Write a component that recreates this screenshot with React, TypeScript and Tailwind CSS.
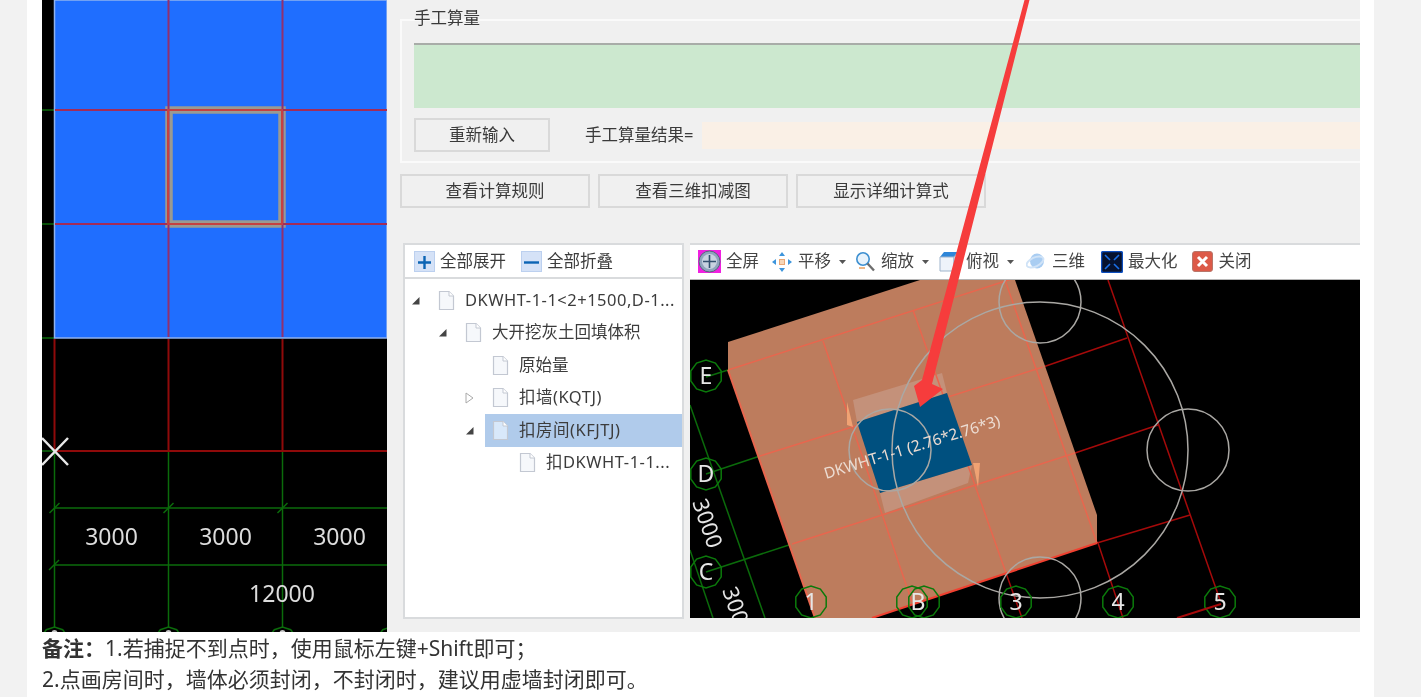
import React from "react";

function deca(cx: number, cy: number, r: number) {
  const p: string[] = [];
  for (let i = 0; i < 10; i++) {
    const a = (Math.PI * 2 * i) / 10 + Math.PI / 10;
    p.push(`${(cx + r * Math.cos(a)).toFixed(1)},${(cy + r * Math.sin(a)).toFixed(1)}`);
  }
  return p.join(" ");
}

function PlanView() {
  const G = "#0b6b0b";
  const R = "#8f0a0a";
  return (
    <svg width="345" height="632" viewBox="42 0 345 632" className="block shrink-0 bg-black">
      {[110, 224, 338].map((y) => <line key={y} x1="42" x2="54" y1={y} y2={y} stroke={G} strokeWidth="1.5" />)}
      <rect x="54.5" y="0" width="332.5" height="338" fill="#1f6eff" stroke="#8fb2ef" strokeWidth="1.5" />
      <rect x="169" y="110" width="113" height="114" fill="none" stroke="#9a9a92" strokeWidth="7.5" />
      {[168.5, 282.5].map((x) => <line key={x} x1={x} x2={x} y1="0" y2="337" stroke="#92306e" strokeWidth="2" />)}
      {[110, 224].map((y) => <line key={y} x1="55" x2="387" y1={y} y2={y} stroke="#a32c58" strokeWidth="2" />)}
      <path d="M168 110H282V224H168Z" fill="none" stroke="#c64040" strokeWidth="2" />
      {[54.5, 168.5, 282.5].map((x) => (
        <g key={x}>
          <line x1={x} x2={x} y1="339" y2="451" stroke={R} strokeWidth="2" />
          <line x1={x} x2={x} y1="451" y2="628" stroke={G} strokeWidth="1.5" />
          <line x1={x - 5} x2={x + 5} y1="513" y2="503" stroke={G} strokeWidth="1.5" />
          <polygon points={deca(x, 641, 14)} fill="none" stroke={G} strokeWidth="1.5" />
          <circle cx={x} cy="633" r="3" fill="#c8c8c8" />
        </g>
      ))}
      <line x1="49" x2="59" y1="570" y2="560" stroke={G} strokeWidth="1.5" />
      <polygon points={deca(391, 641, 14)} fill="none" stroke={G} strokeWidth="1.5" />
      <line x1="54" x2="387" y1="451" y2="451" stroke={R} strokeWidth="2" />
      <line x1="42" x2="54" y1="451" y2="451" stroke={G} strokeWidth="1.5" />
      <line x1="54" x2="387" y1="508" y2="508" stroke={G} strokeWidth="1.5" />
      <line x1="54" x2="387" y1="565" y2="565" stroke={G} strokeWidth="1.5" />
      <g fill="#dcdcdc" fontSize="23" textAnchor="middle" fontFamily="'Noto Sans',sans-serif">
        <text x="111.5" y="545">3000</text>
        <text x="225.5" y="545">3000</text>
        <text x="339.5" y="545">3000</text>
        <text x="282" y="602">12000</text>
      </g>
      <path d="M42 438L68 465M42 465L68 438" stroke="#e8e8e8" strokeWidth="2.5" />
    </svg>
  );
}

function Bubble({ x, y, t }: { x: number; y: number; t?: string }) {
  return (
    <g>
      <polygon points={deca(x, y, 16)} fill="none" stroke="#0b7a0b" strokeWidth="1.5" />
      {t && <text x={x} y={y + 8} textAnchor="middle" fontSize="23" fill="#e6e6e6" fontFamily="'Noto Sans',sans-serif">{t}</text>}
    </g>
  );
}

function View3D() {
  const L = "#e8664e";
  const D = "#a50a0a";
  const G = "#0b6b0b";
  return (
    <svg width="670" height="338" viewBox="690 280 670 338" className="block shrink-0 bg-black">
      <line x1="690" y1="405" x2="765" y2="618" stroke={G} strokeWidth="1.5" />
      <line x1="690" y1="550" x2="713" y2="618" stroke={G} strokeWidth="1.5" />
      <line x1="706" y1="377" x2="728" y2="370" stroke={G} strokeWidth="1.5" />
      <line x1="706" y1="474" x2="760" y2="456" stroke={G} strokeWidth="1.5" />
      <line x1="706" y1="572" x2="792" y2="544" stroke={G} strokeWidth="1.5" />
      <line x1="1108" y1="280" x2="1220" y2="600" stroke={D} strokeWidth="1.5" />
      <line x1="1098" y1="543" x2="1123" y2="618" stroke={D} strokeWidth="1.5" />
      <line x1="1006" y1="573" x2="1022" y2="618" stroke={D} strokeWidth="1.5" />
      <line x1="1043" y1="367" x2="1127" y2="338" stroke={D} strokeWidth="1.5" />
      <line x1="1075" y1="453" x2="1158" y2="425" stroke={D} strokeWidth="1.5" />
      <line x1="1097" y1="543" x2="1190" y2="515" stroke={D} strokeWidth="1.5" />
      <polygon points="728,342 920,280 1015,280 1097,515 1097,543 872,618 815,618 728,370" fill="#bd7c5d" />
      <polygon points="853,400 942,373 947,393 857,422" fill="#c4917a" />
      <polygon points="880,493 972,465 968,483 885,513" fill="#c4917a" />
      <g stroke={L} strokeWidth="1.5" fill="none">
        <line x1="728" y1="370" x2="1015" y2="278" />
        <line x1="760" y1="456" x2="1043" y2="367" />
        <line x1="792" y1="544" x2="1075" y2="453" />
        <line x1="823" y1="341" x2="912" y2="602" />
        <line x1="913" y1="310" x2="1006" y2="573" />
        <line x1="1005" y1="280" x2="1097" y2="543" />
        <line x1="728" y1="370" x2="815" y2="618" strokeWidth="2" />
      </g>
      <line x1="872" y1="618" x2="1097" y2="543" stroke="#f04030" strokeWidth="2" />
      <polygon points="857,422 947,393 972,465 880,493" fill="#00507f" />
      <polygon points="847,402 853,427 847,425" fill="#f0a273" />
      <polygon points="973,463 980,463 978,487" fill="#f0a273" />
      <g fill="none" stroke="#aaa8a4" strokeWidth="1.5">
        <circle cx="1040" cy="450" r="148" />
        <circle cx="1040" cy="302" r="41" />
        <circle cx="1188" cy="450" r="41" />
        <circle cx="1040" cy="598" r="41" />
        <circle cx="890" cy="450" r="41" />
      </g>
      <text transform="translate(826,479) rotate(-17)" fontSize="15.5" fill="#ecdcd2" fontFamily="'Noto Sans',sans-serif">DKWHT-1-1 (2.76*2.76*3)</text>
      <Bubble x={706} y={376} t="E" />
      <Bubble x={706} y={474} t="D" />
      <Bubble x={706} y={572} t="C" />
      <Bubble x={811} y={602} t="1" />
      <Bubble x={912} y={602} />
      <Bubble x={924} y={602} />
      <text x={918} y={610} textAnchor="middle" fontSize="23" fill="#e6e6e6" fontFamily="'Noto Sans',sans-serif">B</text>
      <Bubble x={1016} y={602} t="3" />
      <Bubble x={1118} y={602} t="4" />
      <Bubble x={1220} y={602} t="5" />
      <g fill="#e6e6e6" fontSize="22" fontFamily="'Noto Sans',sans-serif">
        <text transform="translate(692,502) rotate(71)">3000</text>
        <text transform="translate(722,590) rotate(71)">3000</text>
      </g>
      <line x1="1177" y1="618" x2="1221" y2="604" stroke={D} strokeWidth="2" />
    </svg>
  );
}

function FileIcon({ active }: { active?: boolean }) {
  return (
    <svg width="17" height="21" viewBox="0 0 17 21" className="shrink-0">
      <path d="M1.5 1.5H11L15.5 6V19.5H1.5Z" fill={active ? "#d8e8fa" : "#f6f8fb"} stroke="#c3c8d2" strokeWidth="1.2" />
      <path d="M11 1.5V6H15.5" fill="#fff" stroke="#c3c8d2" strokeWidth="1" />
    </svg>
  );
}

function Toggle({ kind }: { kind: "open" | "closed" | "none" }) {
  return (
    <span className="w-[20px] shrink-0 flex items-center justify-start">
      {kind === "open" && (
        <svg width="9" height="9" viewBox="0 0 9 9"><path d="M8.5 1V8.5H1Z" fill="#444" /></svg>
      )}
      {kind === "closed" && (
        <svg width="9" height="12" viewBox="0 0 9 12"><path d="M1 1L8 6L1 11Z" fill="#fff" stroke="#aaa" /></svg>
      )}
    </span>
  );
}

const rows = [
  { pad: "pl-[6px]", kind: "open", text: "DKWHT-1-1<2+1500,D-1...", sel: false, track: "tracking-[0.5px]" },
  { pad: "pl-[33px]", kind: "open", text: "大开挖灰土回填体积", sel: false, track: "" },
  { pad: "pl-[60px]", kind: "none", text: "原始量", sel: false, track: "" },
  { pad: "pl-[60px]", kind: "closed", text: "扣墙(KQTJ)", sel: false, track: "tracking-[0.5px]" },
  { pad: "pl-[60px]", kind: "open", text: "扣房间(KFJTJ)", sel: true, track: "tracking-[0.5px]" },
  { pad: "pl-[87px]", kind: "none", text: "扣DKWHT-1-1...", sel: false, track: "tracking-[0.5px]" },
] as const;

function TreePanel() {
  return (
    <div className="w-[281px] shrink-0 flex flex-col border-2 border-[#d9dbdd] bg-white text-[16.5px] text-[#3c3c3c]">
      <div className="h-[34px] shrink-0 flex items-center pl-[9px] border-b-2 border-[#d9dbdd]">
        <svg width="21" height="21" viewBox="0 0 21 21" className="shrink-0">
          <rect x="0.5" y="0.5" width="20" height="20" fill="#d5e2f7" stroke="#bcd0ef" />
          <path d="M4 11.5H17M10.5 5V18" stroke="#0b64b4" strokeWidth="2.4" />
        </svg>
        <span className="ml-[5px] w-[65px] whitespace-nowrap">全部展开</span>
        <svg width="21" height="21" viewBox="0 0 21 21" className="shrink-0 ml-[16px]">
          <rect x="0.5" y="0.5" width="20" height="20" fill="#d5e2f7" stroke="#bcd0ef" />
          <path d="M3 11.5H18" stroke="#0b64b4" strokeWidth="2.4" />
        </svg>
        <span className="ml-[5px] whitespace-nowrap">全部折叠</span>
      </div>
      <div className="flex-1 pt-[5px] overflow-hidden">
        {rows.map((r) => (
          <div key={r.text} className={`h-[32.5px] flex items-center ${r.pad}`}>
            <Toggle kind={r.kind} />
            <div className={`flex-1 h-full flex items-center pl-[7px] whitespace-nowrap ${r.sel ? "bg-[#b0cbeb]" : ""}`}>
              <FileIcon active={r.sel} />
              <span className={`ml-[10px] ${r.track}`}>{r.text}</span>
            </div>
          </div>
        ))}
      </div>
    </div>
  );
}

function Caret() {
  return <svg width="7" height="4" viewBox="0 0 7 4" className="shrink-0 ml-[8px]"><path d="M0 0H7L3.5 4Z" fill="#555" /></svg>;
}

function Toolbar3D() {
  return (
    <div className="h-[37px] shrink-0 flex items-center bg-white border-t-2 border-b border-t-[#d9dbdd] border-b-[#b5b5b5] pb-[1px] text-[16.5px] text-[#444] whitespace-nowrap pl-[8px]">
      <svg width="23" height="23" viewBox="0 0 23 23" className="shrink-0">
        <rect width="23" height="23" fill="#f020e0" />
        <circle cx="11.5" cy="11.5" r="10.5" fill="#8fa4bd" stroke="#56677c" />
        <circle cx="11.5" cy="11.5" r="7.5" fill="#c8d3e0" />
        <path d="M11.5 5V18M5 11.5H18" stroke="#33506e" strokeWidth="1.6" />
      </svg>
      <span className="ml-[5px]">全屏</span>
      <svg width="22" height="22" viewBox="0 0 22 22" className="shrink-0 ml-[12px]">
        <path d="M11 1L14 5H8ZM11 21L8 17H14ZM1 11L5 8V14ZM21 11L17 14V8Z" fill="#3d95dc" />
        <rect x="8.5" y="8.5" width="5" height="5" fill="#f6d6b8" stroke="#e8a878" />
      </svg>
      <span className="ml-[5px]">平移</span>
      <Caret />
      <svg width="20" height="21" viewBox="0 0 20 21" className="shrink-0 ml-[9px]">
        <circle cx="8" cy="8" r="6.2" fill="#e8f3fc" stroke="#3d8fd0" strokeWidth="1.6" />
        <path d="M12.5 12.5L19 19.5" stroke="#6d6d6d" strokeWidth="2.4" />
        <path d="M4 17H10" stroke="#e8a060" strokeWidth="1.5" />
      </svg>
      <span className="ml-[6px]">缩放</span>
      <Caret />
      <svg width="20" height="21" viewBox="0 0 20 21" className="shrink-0 ml-[10px]">
        <path d="M1 6L5 1H19V6Z" fill="#2e86d8" />
        <path d="M1 6H15V20H1Z" fill="#eef3fa" stroke="#9fb4cc" />
        <path d="M15 6L19 1V15L15 20Z" fill="#dfe8f3" stroke="#9fb4cc" />
      </svg>
      <span className="ml-[7px]">俯视</span>
      <Caret />
      <svg width="21" height="19" viewBox="0 0 21 19" className="shrink-0 ml-[12px]">
        <ellipse cx="11" cy="9" rx="7" ry="7.5" fill="#a9cdf2" />
        <ellipse cx="9" cy="10" rx="9" ry="4.5" fill="none" stroke="#d0e3f7" strokeWidth="2" transform="rotate(-25 9 10)" />
      </svg>
      <span className="ml-[5px]">三维</span>
      <svg width="22" height="22" viewBox="0 0 22 22" className="shrink-0 ml-[16px]">
        <rect x="0.5" y="0.5" width="21" height="21" rx="2" fill="#06122e" stroke="#0d4fc0" strokeWidth="1.5" />
        <path d="M4 4L9 9M18 4L13 9M4 18L9 13M18 18L13 13" stroke="#1a70e8" strokeWidth="1.6" />
      </svg>
      <span className="ml-[5px]">最大化</span>
      <svg width="21" height="21" viewBox="0 0 21 21" className="shrink-0 ml-[14px]">
        <rect x="0.5" y="0.5" width="20" height="20" rx="2.5" fill="#dc5a48" stroke="#b8766a" />
        <path d="M6 6L15 15M15 6L6 15" stroke="#fff" strokeWidth="3" />
      </svg>
      <span className="ml-[6px]">关闭</span>
    </div>
  );
}

function GreyButton({ children, w }: { children: React.ReactNode; w: string }) {
  return (
    <div className={`${w} h-[34px] shrink-0 flex items-center justify-center border-2 border-[#d9d9d9] bg-[#f0f0f0] text-[16.5px] text-[#3a3a3a]`}>
      {children}
    </div>
  );
}

export default function App() {
  return (
    <div className="h-[697px] w-full overflow-hidden bg-[#f2f2f2] font-['Noto_Sans','Noto_Sans_CJK_SC',sans-serif]">
      <div className="ml-[27px] w-[1347px] h-full bg-white pl-[15px]">
        <div className="relative w-[1318px] h-[632px] flex overflow-hidden blur-[0.7px]">
          <PlanView />
          <div className="flex-1 min-w-0 bg-[#f0f0f0] pl-[13px] pt-[19px] flex flex-col">
            <div className="h-[144px] shrink-0 border-2 border-r-0 border-[#fafafa] pl-[12px]">
              <div className="-mt-[15px] h-[24px] text-[16.5px] leading-[24px] text-[#3a3a3a]">手工算量</div>
              <div className="mt-[13px] h-[65px] bg-[#cce8cf] border-t-2 border-[#a8aca8]" />
              <div className="mt-[10px] flex items-center">
                <GreyButton w="w-[136px]">重新输入</GreyButton>
                <span className="ml-[35px] w-[117px] shrink-0 whitespace-nowrap text-[16.5px] text-[#3a3a3a]">手工算量结果=</span>
                <div className="h-[27px] flex-1 bg-[#faf0e6]" />
              </div>
            </div>
            <div className="mt-[11px] flex gap-[8px]">
              <GreyButton w="w-[190px]">查看计算规则</GreyButton>
              <GreyButton w="w-[190px]">查看三维扣减图</GreyButton>
              <GreyButton w="w-[190px]">显示详细计算式</GreyButton>
            </div>
            <div className="mt-[35px] ml-[3px] h-[376px] flex gap-[6px]">
              <TreePanel />
              <div className="flex-1 min-w-0 flex flex-col">
                <Toolbar3D />
                <View3D />
              </div>
            </div>
          </div>
          <svg width="130" height="420" viewBox="900 0 130 420" className="absolute left-[858px] top-0">
            <path d="M1024.5 0H1029.5L932 384L943 389L920 407L914 386L922 380Z" fill="#f63c3c" />
          </svg>
        </div>
        <div className="pt-[1px] text-[21px] leading-[31px] text-[#333] blur-[0.5px]">
          <p className="whitespace-nowrap"><b className="font-bold">备注：</b>1.若捕捉不到点时，使用鼠标左键+Shift即可；</p>
          <p className="whitespace-nowrap">2.点画房间时，墙体必须封闭，不封闭时，建议用虚墙封闭即可。</p>
        </div>
      </div>
    </div>
  );
}
